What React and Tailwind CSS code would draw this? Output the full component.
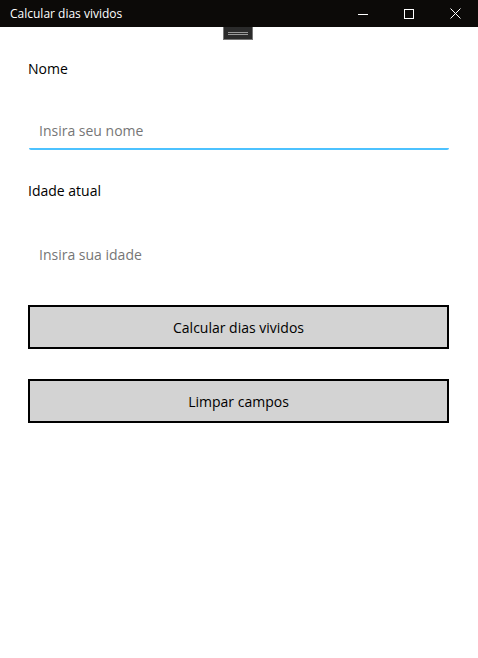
import React, { useState } from "react";

const App = () => {
  const [nome, setNome] = useState("");
  const [idade, setIdade] = useState("");

  const limpar = () => {
    setNome("");
    setIdade("");
  };

  return (
    <div className="w-[478px] h-[658px] bg-white font-['Open_Sans',sans-serif] relative">
      {/* title bar */}
      <div className="h-[27px] bg-[#0c0a08] flex items-center text-white">
        <span className="pl-[10px] text-[12px] leading-none">Calcular dias vividos</span>
        <div className="ml-auto flex items-center h-full">
          <div className="w-[46px] h-full flex items-center justify-center">
            <div className="w-[10px] h-px bg-white mt-px"></div>
          </div>
          <div className="w-[46px] h-full flex items-center justify-center">
            <div className="w-[10px] h-[10px] border border-white"></div>
          </div>
          <div className="w-[46px] h-full flex items-center justify-center">
            <svg width="11" height="11" viewBox="0 0 11 11" stroke="white" strokeWidth="1">
              <path d="M0.5 0.5L10.5 10.5M10.5 0.5L0.5 10.5" />
            </svg>
          </div>
        </div>
      </div>
      {/* drag handle */}
      <div className="absolute left-[223px] top-[27px] w-[30px] h-[13px] bg-[#2b2b2b] border border-t-0 border-[#777] flex flex-col items-center justify-center gap-[1px]">
        <div className="w-[20px] h-px bg-[#999]"></div>
        <div className="w-[20px] h-px bg-[#999]"></div>
      </div>

      <div className="px-[28px] pt-[33px] flex flex-col">
        <label className="text-[14px] text-black leading-[18px]">Nome</label>
        <div className="mt-[34px] h-[38px] mx-px border-b-2 border-[#4cc2ff] rounded-b-[2px] flex items-center">
          <input
            value={nome}
            onChange={(e) => setNome(e.target.value)}
            placeholder="Insira seu nome"
            className="w-full pl-[10px] text-[14px] outline-none bg-transparent placeholder:text-[#767676] text-black"
          />
        </div>
        <label className="mt-[32px] text-[14px] text-black leading-[18px]">Idade atual</label>
        <div className="mt-[36px] h-[38px] mx-px border-b-2 border-transparent flex items-center">
          <input
            value={idade}
            onChange={(e) => setIdade(e.target.value)}
            placeholder="Insira sua idade"
            className="w-full pl-[10px] text-[14px] outline-none bg-transparent placeholder:text-[#767676] text-black"
          />
        </div>
        <button className="mt-[31px] h-[44px] w-[421px] border-2 border-black bg-[#d3d3d3] text-[14px] text-black">
          Calcular dias vividos
        </button>
        <button
          onClick={limpar}
          className="mt-[30px] h-[44px] w-[421px] border-2 border-black bg-[#d3d3d3] text-[14px] text-black"
        >
          Limpar campos
        </button>
      </div>
    </div>
  );
};

export default App;
